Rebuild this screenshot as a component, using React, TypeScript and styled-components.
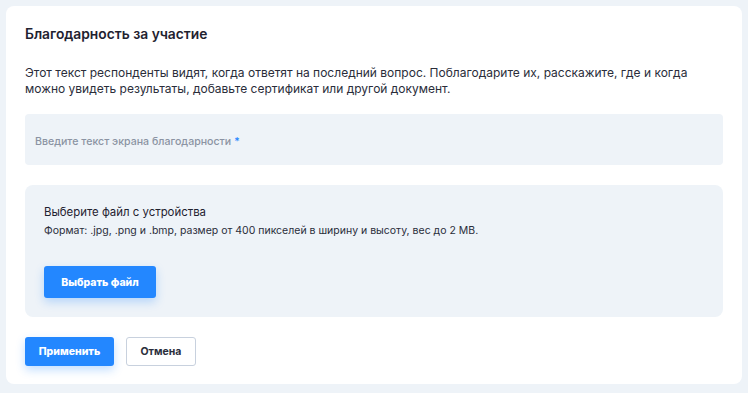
import React from "react";
import styled, { createGlobalStyle } from "styled-components";

const Global = createGlobalStyle`
  html, body { margin: 0; padding: 0; background: #eef3f8; }
  body { font-family: Inter, "Noto Sans", sans-serif; color: #1f2230; }
  * { box-sizing: border-box; }
`;

const Page = styled.div`
  padding: 6px 6px 9px 6px;
  width: 748px;
`;

const Card = styled.div`
  background: #fff;
  border-radius: 8px;
  padding: 18px 19px 18px 19px;
  display: flex;
  flex-direction: column;
`;

const Title = styled.h2`
  margin: 0;
  font-size: 13.8px;
  font-weight: 600;
  line-height: 20px;
  color: #1f2230;
`;

const Description = styled.p`
  margin: 21px 0 0 0;
  font-size: 12px;
  line-height: 16px;
  color: #2a2d3a;
`;

const Field = styled.div`
  margin-top: 17px;
  height: 51px;
  border-radius: 4px;
  background: #eef3f8;
  display: flex;
  align-items: center;
  padding: 3px 10px 0 10px;
  font-size: 10.6px;
  font-weight: 500;
  color: #8b93a3;
`;

const Required = styled.span`
  color: #2a86ff;
  margin-left: 3px;
`;

const FileBox = styled.div`
  margin-top: 20px;
  border-radius: 8px;
  background: #eef3f8;
  padding: 19px 19px 19px 19px;
  display: flex;
  flex-direction: column;
  align-items: flex-start;
`;

const FileTitle = styled.div`
  font-size: 11.4px;
  line-height: 16px;
  color: #1f2230;
`;

const FileHint = styled.div`
  margin-top: 4px;
  font-size: 10.5px;
  line-height: 14px;
  color: #2a2d3a;
`;

const Button = styled.button<{ $variant?: "primary" | "secondary" }>`
  font-family: Inter, "Noto Sans", sans-serif;
  font-size: 10.5px;
  font-weight: 800;
  border-radius: 3px;
  cursor: pointer;
  padding: 0;
  ${(p) =>
    p.$variant === "secondary"
      ? `background: #fff; color: #2b2e3c; border: 1px solid #c8d1de; font-weight: 700;`
      : `background: #2387ff; color: #fff; border: none; box-shadow: 0 4px 10px rgba(35,135,255,0.28);`}
`;

const PickButton = styled(Button)`
  margin-top: 28px;
  width: 112px;
  height: 32px;
`;

const Actions = styled.div`
  margin-top: 20px;
  display: flex;
  gap: 12px;
`;

const ActionButton = styled(Button)<{ $w: number }>`
  width: ${(p) => p.$w}px;
  height: 29px;
`;

export default function App() {
  return (
    <>
      <Global />
      <Page>
        <Card>
          <Title>Благодарность за участие</Title>
          <Description>
            Этот текст респонденты видят, когда ответят на последний вопрос. Поблагодарите их, расскажите, где и когда
            <br />
            можно увидеть результаты, добавьте сертификат или другой документ.
          </Description>
          <Field>
            Введите текст экрана благодарности<Required>*</Required>
          </Field>
          <FileBox>
            <FileTitle>Выберите файл с устройства</FileTitle>
            <FileHint>Формат: .jpg, .png и .bmp, размер от 400 пикселей в ширину и высоту, вес до 2 MB.</FileHint>
            <PickButton>Выбрать файл</PickButton>
          </FileBox>
          <Actions>
            <ActionButton $w={89}>Применить</ActionButton>
            <ActionButton $variant="secondary" $w={70}>Отмена</ActionButton>
          </Actions>
        </Card>
      </Page>
    </>
  );
}
